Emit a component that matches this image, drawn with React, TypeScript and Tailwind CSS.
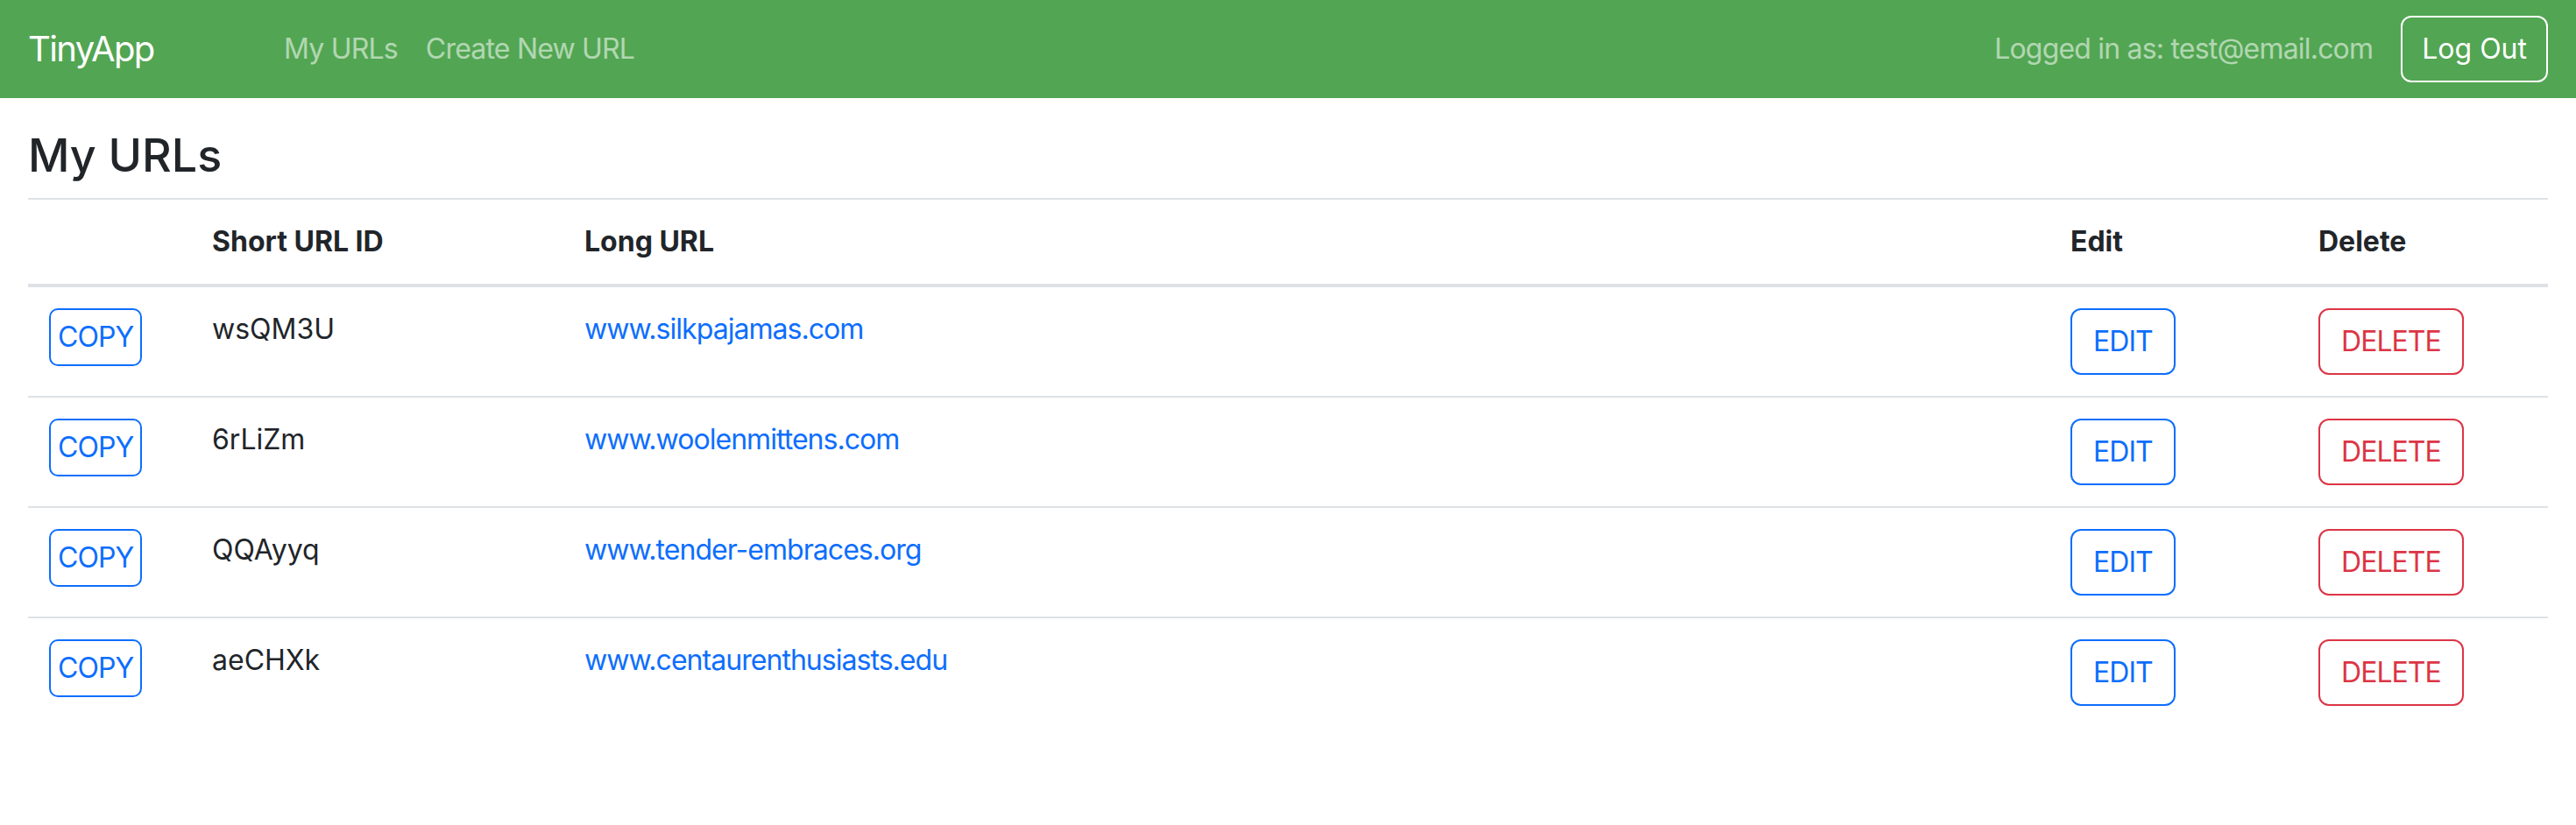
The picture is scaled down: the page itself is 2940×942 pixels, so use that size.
import React from 'react';

type UrlRow = { id: string; longUrl: string };

const urls: UrlRow[] = [
  { id: 'wsQM3U', longUrl: 'www.silkpajamas.com' },
  { id: '6rLiZm', longUrl: 'www.woolenmittens.com' },
  { id: 'QQAyyq', longUrl: 'www.tender-embraces.org' },
  { id: 'aeCHXk', longUrl: 'www.centaurenthusiasts.edu' },
];

const Navbar: React.FC = () => (
  <nav className="h-[112px] bg-[#52a552] px-[32px] flex items-center">
    <a className="w-[292px] text-[40px] leading-[60px] tracking-[-0.04em] text-white">TinyApp</a>
    <div className="flex items-center gap-[32px] text-[32px] leading-[48px] tracking-[-0.025em] text-white/55">
      <a>My URLs</a>
      <a>Create New URL</a>
    </div>
    <div className="ml-auto flex items-center gap-[32px]">
      <span className="text-[32px] leading-[48px] tracking-[-0.025em] text-white/55">Logged in as: test@email.com</span>
      <button className="h-[76px] px-[22px] border-2 border-white rounded-[12px] text-[32px] leading-[48px] text-white">
        Log Out
      </button>
    </div>
  </nav>
);

const App: React.FC = () => {
  return (
    <div className="min-h-screen bg-white text-[#212529] font-['Inter',sans-serif]">
      <Navbar />
      <main className="px-[32px]">
        <h3 className="mt-[35px] text-[52px] leading-[62px] font-medium">My URLs</h3>
        <table className="mt-[17px] w-full table-fixed border-collapse border-t-2 border-[#dee2e6] text-[32px] leading-[48px]">
          <colgroup>
            <col className="w-[186px]" />
            <col className="w-[425px]" />
            <col className="w-[1696px]" />
            <col className="w-[283px]" />
            <col />
          </colgroup>
          <thead>
            <tr className="border-b-4 border-[#dee2e6]">
              <th className="p-[24px] text-left font-bold"></th>
              <th className="p-[24px] text-left font-bold">Short URL ID</th>
              <th className="p-[24px] text-left font-bold">Long URL</th>
              <th className="p-[24px] text-left font-bold">Edit</th>
              <th className="p-[24px] text-left font-bold">Delete</th>
            </tr>
          </thead>
          <tbody>
            {urls.map((u, i) => (
              <tr key={u.id} className={i < urls.length - 1 ? 'border-b-2 border-[#dee2e6]' : ''}>
                <td className="p-[24px] align-top">
                  <button className="h-[66px] px-[8px] border-2 border-[#0d6efd] rounded-[10px] tracking-[-0.03em] text-[#0d6efd]">
                    COPY
                  </button>
                </td>
                <td className="p-[24px] align-top">{u.id}</td>
                <td className="p-[24px] align-top">
                  <a className="tracking-[-0.03em] text-[#0d6efd]">{u.longUrl}</a>
                </td>
                <td className="p-[24px] align-top">
                  <button className="h-[76px] px-[24px] border-2 border-[#0d6efd] rounded-[12px] tracking-[-0.03em] text-[#0d6efd]">
                    EDIT
                  </button>
                </td>
                <td className="p-[24px] align-top">
                  <button className="h-[76px] px-[24px] border-2 border-[#dc3545] rounded-[12px] tracking-[-0.03em] text-[#dc3545]">
                    DELETE
                  </button>
                </td>
              </tr>
            ))}
          </tbody>
        </table>
      </main>
    </div>
  );
};

export default App;
